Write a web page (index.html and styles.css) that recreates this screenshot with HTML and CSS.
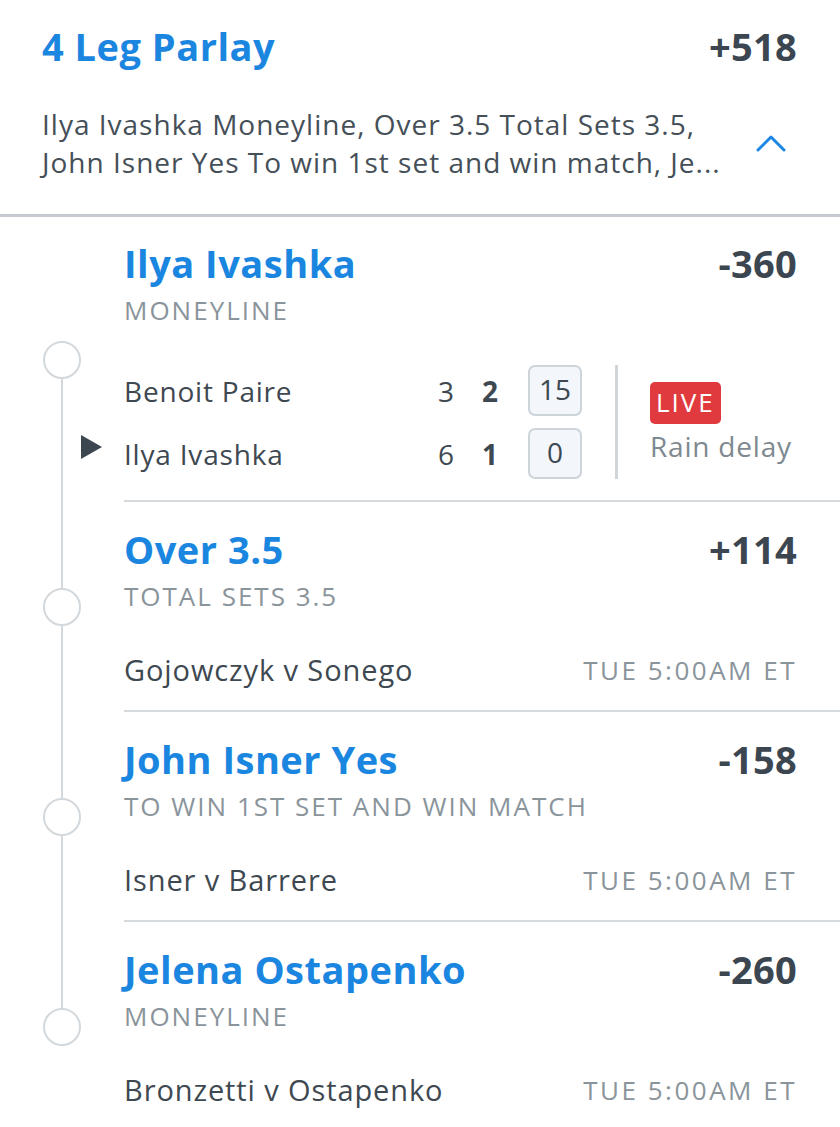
FILE: index.html
```html
<!DOCTYPE html>
<html>
	<head>
		<meta charset="utf-8" />
		<title>4 Leg Parlay</title>
		<link rel="stylesheet" href="styles.css">
	</head>
	<body>
		<main class="parlay">
			<header class="parlay-header">
				<div class="row">
					<h1 class="title">4 Leg Parlay</h1>
					<div class="odds">+518</div>
				</div>
				<div class="summary">
					<p class="summary-text">
						<span class="line">Ilya Ivashka Moneyline, Over 3.5 Total Sets 3.5,</span>
						<span class="line clip">John Isner Yes To win 1st set and win match, Je...</span>
					</p>
					<svg class="chevron" width="30" height="17" viewBox="0 0 30 17">
						<path d="M2 15 L15 2 L28 15" fill="none" stroke="#1c88e3" stroke-width="3" stroke-linecap="round" stroke-linejoin="round" />
					</svg>
				</div>
			</header>

			<section class="legs">
				<div class="leg first">
					<div class="rail"><span class="rail-line"></span><span class="dot"></span><span class="rail-line"></span></div>
					<div class="leg-body">
						<div class="row">
							<h2 class="title">Ilya Ivashka</h2>
							<div class="odds">-360</div>
						</div>
						<div class="market">MONEYLINE</div>
						<div class="score-block">
							<div class="score-table">
								<div class="score-row">
									<span class="serve"></span>
									<span class="player">Benoit Paire</span>
									<span class="set">3</span>
									<span class="set current">2</span>
									<span class="game">15</span>
								</div>
								<div class="score-row">
									<span class="serve"><i class="serve-mark"></i></span>
									<span class="player">Ilya Ivashka</span>
									<span class="set">6</span>
									<span class="set current">1</span>
									<span class="game">0</span>
								</div>
							</div>
							<div class="vline"></div>
							<div class="status">
								<span class="live">LIVE</span>
								<span class="note">Rain delay</span>
							</div>
						</div>
					</div>
				</div>

				<div class="leg">
					<div class="rail"><span class="rail-line"></span><span class="dot"></span><span class="rail-line"></span></div>
					<div class="leg-body">
						<div class="row">
							<h2 class="title">Over 3.5</h2>
							<div class="odds">+114</div>
						</div>
						<div class="market">TOTAL SETS 3.5</div>
						<div class="match">
							<span>Gojowczyk v Sonego</span>
							<span class="time">TUE 5:00AM ET</span>
						</div>
					</div>
				</div>

				<div class="leg">
					<div class="rail"><span class="rail-line"></span><span class="dot"></span><span class="rail-line"></span></div>
					<div class="leg-body">
						<div class="row">
							<h2 class="title">John Isner Yes</h2>
							<div class="odds">-158</div>
						</div>
						<div class="market">TO WIN 1ST SET AND WIN MATCH</div>
						<div class="match">
							<span>Isner v Barrere</span>
							<span class="time">TUE 5:00AM ET</span>
						</div>
					</div>
				</div>

				<div class="leg last">
					<div class="rail"><span class="rail-line"></span><span class="dot"></span><span class="rail-line"></span></div>
					<div class="leg-body">
						<div class="row">
							<h2 class="title">Jelena Ostapenko</h2>
							<div class="odds">-260</div>
						</div>
						<div class="market">MONEYLINE</div>
						<div class="match">
							<span>Bronzetti v Ostapenko</span>
							<span class="time">TUE 5:00AM ET</span>
						</div>
					</div>
				</div>
			</section>
		</main>
	</body>
</html>
```

FILE: styles.css
```css
body {
	margin: 0;
	background: #ffffff;
	color: #3e4851;
	font-family: 'Open Sans', 'Noto Sans', sans-serif;
}
.row {
	display: flex;
	justify-content: space-between;
	align-items: baseline;
}
.title {
	margin: 0;
	font-size: 38px;
	line-height: 44px;
	font-weight: 700;
	letter-spacing: 0.5px;
	color: #1b86e0;
}
.odds {
	font-size: 38px;
	line-height: 44px;
	font-weight: 700;
	letter-spacing: 0.3px;
	color: #3b4650;
}

/* header */
.parlay-header {
	padding: 24px 43px 33px 42px;
	border-bottom: 3px solid #c5cbd0;
}
.summary {
	display: flex;
	align-items: center;
	margin-top: 37px;
}
.summary-text {
	flex: 1;
	margin: 0;
	font-size: 28px;
	line-height: 38px;
	letter-spacing: 1px;
	color: #454f58;
}
.summary-text .line {
	display: block;
	white-space: nowrap;
}
.chevron {
	margin-right: 11px;
}

/* legs */
.leg {
	display: grid;
	grid-template-columns: 124px 1fr;
}
.rail {
	display: flex;
	flex-direction: column;
	align-items: center;
}
.rail-line {
	flex: 1;
	width: 2px;
	background: #d3d8dc;
}
.first .rail-line:first-child,
.last .rail-line:last-child {
	visibility: hidden;
}
.dot {
	width: 34px;
	height: 34px;
	border: 2px solid #d3d8dc;
	border-radius: 50%;
	background: #ffffff;
}
.leg-body {
	padding: 25px 43px 24px 0;
	border-bottom: 2px solid #d5dade;
}
.leg.first .leg-body {
	padding-top: 24px;
	padding-bottom: 21px;
}
.market {
	margin-top: 10px;
	font-size: 26px;
	line-height: 30px;
	letter-spacing: 2px;
	color: #8a949b;
}
.match {
	display: flex;
	justify-content: space-between;
	margin-top: 43px;
	font-size: 29px;
	line-height: 32px;
	letter-spacing: 0.9px;
}
.match .time {
	font-size: 26px;
	letter-spacing: 2.5px;
	color: #8a949b;
}

/* live score */
.score-block {
	display: flex;
	align-items: center;
	margin-top: 40px;
}
.score-table {
	display: flex;
	flex-direction: column;
	gap: 12px;
	width: 458px;
}
.score-row {
	display: grid;
	grid-template-columns: 43px 1fr 44px 60px 54px;
	align-items: center;
	margin-left: -43px;
	font-size: 28px;
	letter-spacing: 0.8px;
}
.serve {
	display: flex;
	align-items: center;
	margin-top: -14px;
}
.serve-mark {
	width: 0;
	height: 0;
	border-left: 21px solid #3b4650;
	border-top: 12px solid transparent;
	border-bottom: 12px solid transparent;
}
.set {
	text-align: center;
	letter-spacing: 0;
}
.set.current {
	font-weight: 700;
	padding-right: 16px;
}
.game {
	height: 47px;
	line-height: 45px;
	text-align: center;
	letter-spacing: 0;
	border: 2px solid #cdd4da;
	border-radius: 7px;
	background: #f3f6fa;
}
.vline {
	align-self: stretch;
	width: 3px;
	margin: 0 32px 0 33px;
	background: #d0d5d9;
}
.status {
	display: flex;
	flex-direction: column;
	align-items: flex-start;
	gap: 6px;
}
.live {
	padding: 0 6px;
	height: 42px;
	line-height: 41px;
	border-radius: 5px;
	background: #e03a3e;
	color: #ffffff;
	font-size: 26px;
	letter-spacing: 2px;
}
.note {
	font-size: 28px;
	line-height: 32px;
	letter-spacing: 0.8px;
	color: #7e8990;
}
```
